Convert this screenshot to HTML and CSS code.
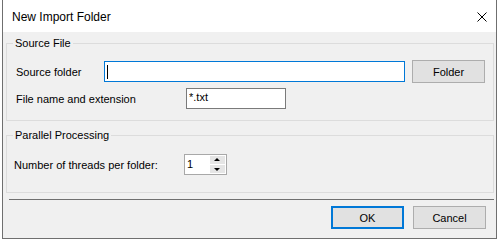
FILE: index.html
```html
<!doctype html>
<html>
<head>
  <meta charset="utf-8">
  <title>New Import Folder</title>
  <link rel="stylesheet" href="styles.css">
</head>
<body>
  <div class="window">
    <div class="titlebar">
      <span class="title">New Import Folder</span>
      <span class="close">
        <svg width="10" height="10" viewBox="0 0 10 10">
          <path d="M0.5 0.5 L9.5 9.5 M9.5 0.5 L0.5 9.5" stroke="#000" stroke-width="1" fill="none"/>
        </svg>
      </span>
    </div>

    <div class="content">
      <fieldset class="group">
        <legend>Source File</legend>
        <div class="group-body source">
          <div class="row row-folder">
            <label class="label label-folder">Source folder</label>
            <div class="field field-focus"><span class="caret"></span></div>
            <button class="button">Folder</button>
          </div>
          <div class="row row-ext">
            <label class="label label-ext">File name and extension</label>
            <input class="field field-ext" type="text" value="*.txt">
          </div>
        </div>
      </fieldset>

      <fieldset class="group group-parallel">
        <legend>Parallel Processing</legend>
        <div class="group-body parallel">
          <div class="row">
            <label class="label label-threads">Number of threads per folder:</label>
            <div class="spinner">
              <span class="spinner-value">1</span>
              <span class="spinner-buttons">
                <span class="spin spin-up"></span>
                <span class="spin spin-down"></span>
              </span>
            </div>
          </div>
        </div>
      </fieldset>

      <div class="separator"></div>

      <div class="actions">
        <button class="button default">OK</button>
        <button class="button">Cancel</button>
      </div>
    </div>
  </div>
</body>
</html>
```

FILE: styles.css
```css
html, body {
  margin: 0;
  padding: 0;
  background-color: #fff;
}
body {
  font-family: "Liberation Sans", Arial, sans-serif;
  font-size: 11px;
  color: #000;
}
.window {
  width: 495px;
  height: 239px;
  margin-left: 2px;
  box-sizing: border-box;
  border: 1px solid #6f6f6f;
  border-top: none;
  background-color: #f0f0f0;
  display: flex;
  flex-direction: column;
}
.titlebar {
  height: 32px;
  background-color: #fff;
  display: flex;
  align-items: center;
  justify-content: space-between;
  padding: 0 8px 0 9px;
  flex: 0 0 auto;
}
.title {
  font-size: 12px;
  padding-top: 2px;
}
.close {
  display: flex;
  width: 10px;
  height: 10px;
  margin-right: 1px;
  margin-top: 2px;
}
.content {
  flex: 1;
  padding: 4px 2px 0 3px;
  display: flex;
  flex-direction: column;
}
.group {
  margin: 0;
  padding: 0 6px;
  border: 1px solid #dcdcdc;
  min-width: 0;
}
.group legend {
  padding: 0 2px;
  line-height: 14px;
  font-size: 11px;
}
.group-parallel {
  margin-top: 7px;
}
.group-body.source {
  padding: 10px 2px 11px 3px;
}
.group-body.parallel {
  padding: 12px 2px 17px 1px;
}
.row {
  display: flex;
  align-items: center;
}
.row-ext {
  margin-top: 5px;
}
.label-folder {
  flex: 0 0 88px;
}
.label-ext,
.label-threads {
  flex: 0 0 170px;
}
.field {
  height: 21px;
  box-sizing: border-box;
  border: 1px solid #7a7a7a;
  background-color: #fff;
  font-family: inherit;
  font-size: 11px;
  padding: 0 2px;
  margin: 0;
  outline: none;
}
.field-focus {
  flex: 1;
  border-color: #0078d7;
  display: flex;
  align-items: center;
}
.caret {
  width: 1px;
  height: 14px;
  background-color: #000;
}
.field-ext {
  width: 100px;
  padding-bottom: 3px;
}
.button {
  width: 73px;
  height: 23px;
  box-sizing: border-box;
  border: 1px solid #adadad;
  background-color: #e1e1e1;
  font-family: inherit;
  font-size: 11px;
  color: #000;
  padding: 0;
  margin: 0;
}
.row-folder .button {
  margin-left: 7px;
}
.button.default {
  border: 2px solid #0078d7;
}
.spinner {
  width: 43px;
  height: 21px;
  box-sizing: border-box;
  border: 1px solid #a8a8a8;
  background-color: #fff;
  display: flex;
  justify-content: space-between;
}
.spinner-value {
  padding: 2px 0 0 2px;
  line-height: 14px;
}
.spinner-buttons {
  width: 15px;
  display: flex;
  flex-direction: column;
  padding: 1px 1px 1px 0;
  gap: 1px;
}
.spin {
  flex: 1;
  background-color: #e5e5e5;
  position: relative;
}
.spin::after {
  content: "";
  position: absolute;
  left: 4px;
  border-left: 3px solid transparent;
  border-right: 3px solid transparent;
}
.spin-up::after {
  top: 2px;
  border-bottom: 3px solid #000;
}
.spin-down::after {
  top: 3px;
  border-top: 3px solid #000;
}
.separator {
  height: 1px;
  background-color: #6f6f6f;
  margin: 6px 0 0 3px;
}
.actions {
  display: flex;
  justify-content: flex-end;
  gap: 9px;
  padding: 6px 8px 0 0;
}
```
